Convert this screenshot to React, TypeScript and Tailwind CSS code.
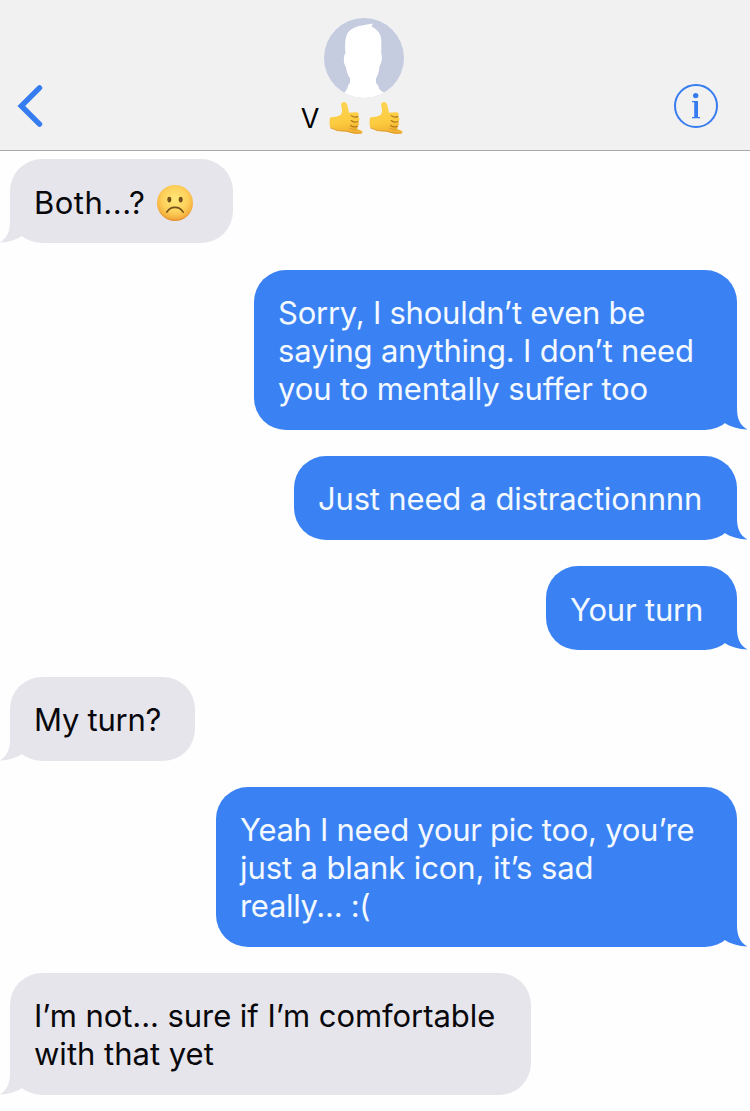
import type { ReactNode } from "react";
import clsx from "clsx";

type Message = {
    id: number;
    mine: boolean;
    width: string;
    lines: { text: string; spacing: string }[];
    emoji?: ReactNode;
};

const SadFace = () => (
    <svg viewBox="0 0 36 36" className="ml-3 h-9 w-9 shrink-0" aria-label="frowning face">
        <defs>
            <radialGradient id="face" cx="50%" cy="40%" r="60%">
                <stop offset="0" stopColor="#ffe878" />
                <stop offset="0.6" stopColor="#fdd05a" />
                <stop offset="0.88" stopColor="#f5b03f" />
                <stop offset="1" stopColor="#e08a2c" />
            </radialGradient>
        </defs>
        <circle cx="18" cy="18" r="18" fill="url(#face)" />
        <ellipse cx="12.3" cy="14.6" rx="2" ry="2.8" fill="#73501a" />
        <ellipse cx="23.7" cy="14.6" rx="2" ry="2.8" fill="#73501a" />
        <path d="M9.8 27.2C13.5 20.8 22.5 20.8 26.2 27.2" fill="none" stroke="#73501a" strokeWidth="1.6" strokeLinecap="round" />
    </svg>
);

const CallMeHand = () => (
    <svg viewBox="0 0 34 34" className="h-[34px] w-[34px]" aria-label="call me hand">
        <defs>
            <linearGradient id="hand" x1="0" y1="0" x2="0.2" y2="1">
                <stop offset="0" stopColor="#ffd657" />
                <stop offset="0.7" stopColor="#fccb3f" />
                <stop offset="1" stopColor="#f2b233" />
            </linearGradient>
        </defs>
        <path
            d="M1 16.5C4.5 15.9 8.6 15.9 11.4 14C13.6 12.2 13.3 8 12.2 4.4C11.5 .7 16.2-.2 17.8 2.8C19.1 5.6 19.1 9 20 11.8L27 11.3C29.8 11.2 30.5 14.2 28.8 15.6C30.8 16.6 30.8 19.6 29 20.5C30.6 21.8 30.3 24.6 28.3 25.4C29.1 26.4 28.6 27.6 27.9 28.1L32.6 29.7C34 30.5 33.4 32.6 31.8 32.6C27.4 32.9 23.8 32.5 20 31.2C16.5 29.9 12 30.8 8.5 29.8C5.7 29 4.4 27.6 1.6 27.3C.3 24.3 .3 19.9 1 16.5Z"
            fill="url(#hand)"
        />
        <path d="M22.4 14.6C24 16.2 26.6 16.4 28.7 15.6M22.2 19.6C24 21.2 27 21.3 28.9 20.5M21.8 24.4C23.6 26 26.2 26.1 28.2 25.4" fill="none" stroke="#b57c1c" strokeWidth="1.3" strokeLinecap="round" />
        <path d="M20.8 27.2C22.8 28.4 25.4 28.6 27.7 28.1" fill="none" stroke="#d99b2b" strokeWidth="0.9" strokeLinecap="round" />
        <path d="M2 27.1C4.6 27.8 6 29 8.8 29.5C12.5 30.3 16.5 29.6 20 30.8C23.7 32.1 28 32.4 32 32.2" fill="none" stroke="#dd9a2a" strokeWidth="0.9" strokeLinecap="round" />
    </svg>
);

const Avatar = () => (
    <svg viewBox="0 0 80 80" className="h-20 w-20">
        <defs>
            <clipPath id="avatar">
                <circle cx="40" cy="40" r="40" />
            </clipPath>
        </defs>
        <g clipPath="url(#avatar)">
            <rect width="80" height="80" fill="#c5cce0" />
            <path
                d="M16 80C19 75 23.5 73 24 67.5L26 64.5V60C23.5 57 22.5 53.5 22 49C19.8 46.5 19.3 41 20.5 36.5L21.5 35.5C20.8 28 20.8 19.5 24 14.5C28.5 9 36.5 7.5 43 6.5L49 5.5L47.5 8.5C54 12 57.3 16 57.3 23V35.5C58.6 39 58 44.5 55.5 48.5C55 54 53.7 57.5 52 60.5V65L54.3 67.8C55 72.5 58 73.3 61 75L64 80Z"
                fill="#fff"
            />
        </g>
    </svg>
);

const messages: Message[] = [
    {
        id: 1,
        mine: false,
        width: "w-[223px]",
        lines: [{ text: "Both...?", spacing: "tracking-[0.5px]" }],
        emoji: <SadFace />,
    },
    {
        id: 2,
        mine: true,
        width: "w-[483px]",
        lines: [
            { text: "Sorry, I shouldn’t even be", spacing: "tracking-[-0.23px]" },
            { text: "saying anything. I don’t need", spacing: "tracking-[-0.2px]" },
            { text: "you to mentally suffer too", spacing: "tracking-[-0.12px]" },
        ],
    },
    {
        id: 3,
        mine: true,
        width: "w-[443px]",
        lines: [{ text: "Just need a distractionnnn", spacing: "tracking-[-0.18px]" }],
    },
    {
        id: 4,
        mine: true,
        width: "w-[191px]",
        lines: [{ text: "Your turn", spacing: "tracking-[-0.2px]" }],
    },
    {
        id: 5,
        mine: false,
        width: "w-[185px]",
        lines: [{ text: "My turn?", spacing: "tracking-[-0.25px]" }],
    },
    {
        id: 6,
        mine: true,
        width: "w-[521px]",
        lines: [
            { text: "Yeah I need your pic too, you’re", spacing: "tracking-[-0.28px]" },
            { text: "just a blank icon, it’s sad", spacing: "tracking-[-0.1px]" },
            { text: "really... :(", spacing: "tracking-[-0.3px]" },
        ],
    },
    {
        id: 7,
        mine: false,
        width: "w-[521px]",
        lines: [
            { text: "I’m not... sure if I’m comfortable", spacing: "tracking-[-0.06px]" },
            { text: "with that yet", spacing: "tracking-[0px]" },
        ],
    },
];

const Bubble = ({ message }: { message: Message }) => (
    <div
        className={clsx(
            "relative rounded-[32px] pt-[24.3px] pb-[21.7px] pl-6 text-[31px] leading-[38px] whitespace-nowrap",
            message.width,
            message.mine ? "self-end bg-[#3a82f3] text-[#f3f9ff]" : "self-start bg-[#e6e5eb] text-[#08080c]"
        )}
    >
        {message.lines.map((line) => (
            <div key={line.text} className="flex h-[38px] items-center">
                <span className={line.spacing}>{line.text}</span>
                {message.emoji}
            </div>
        ))}

        {/* Tail hangs over the bottom corner */}
        <svg
            viewBox="0 0 24 34"
            className={clsx(
                "absolute bottom-0 h-[34px] w-6 overflow-visible",
                message.mine ? "-right-2.5 fill-[#3a82f3]" : "-left-2.5 -scale-x-100 fill-[#e6e5eb]"
            )}
        >
            <path d="M0 0H14V12C14 22 16.5 29 24.6 33.6C15.5 33.4 7.5 31 .7 26.6L0 27Z" />
        </svg>
    </div>
);

const App = () => {
    return (
        <div className="h-[1111px] w-[750px] overflow-hidden bg-[#fefefe] font-['Inter','Liberation_Sans',sans-serif]">
            {/* Header */}
            <header className="flex h-[151px] items-start justify-between border-b-[1.5px] border-[#a9a9ab] bg-[#f1f1f1]">
                <svg viewBox="0 0 26 44" className="mt-[84px] ml-[17px] h-11 w-[26px]" fill="none" stroke="#357cf0" strokeWidth="5.4" strokeLinecap="round" strokeLinejoin="miter">
                    <path d="M22.5 3.8L4.3 22L22.5 40.2" />
                </svg>

                <div className="mt-[18px] ml-[11px] flex flex-col items-center">
                    <Avatar />
                    <div className="mt-[3px] mr-6 flex h-[35px] items-start">
                        <span className="mr-2.5 text-[27px] leading-9 text-black">V</span>
                        <CallMeHand />
                        <span className="w-1.5" />
                        <CallMeHand />
                    </div>
                </div>

                <svg viewBox="0 0 44 44" className="mt-[84px] mr-8 h-11 w-11">
                    <circle cx="22" cy="22" r="21" fill="none" stroke="#357cf0" strokeWidth="2" />
                    <circle cx="21.7" cy="11.6" r="2.7" fill="#357cf0" />
                    <path d="M18 17H24V33H26V34.2H18V33H20.2V18.3H18Z" fill="#357cf0" />
                </svg>
            </header>

            {/* Conversation */}
            <main className="flex flex-col gap-[26.3px] pt-[8.4px] pr-[13px] pl-2.5">
                {messages.map((message) => (
                    <Bubble key={message.id} message={message} />
                ))}
            </main>
        </div>
    );
};

export default App;
